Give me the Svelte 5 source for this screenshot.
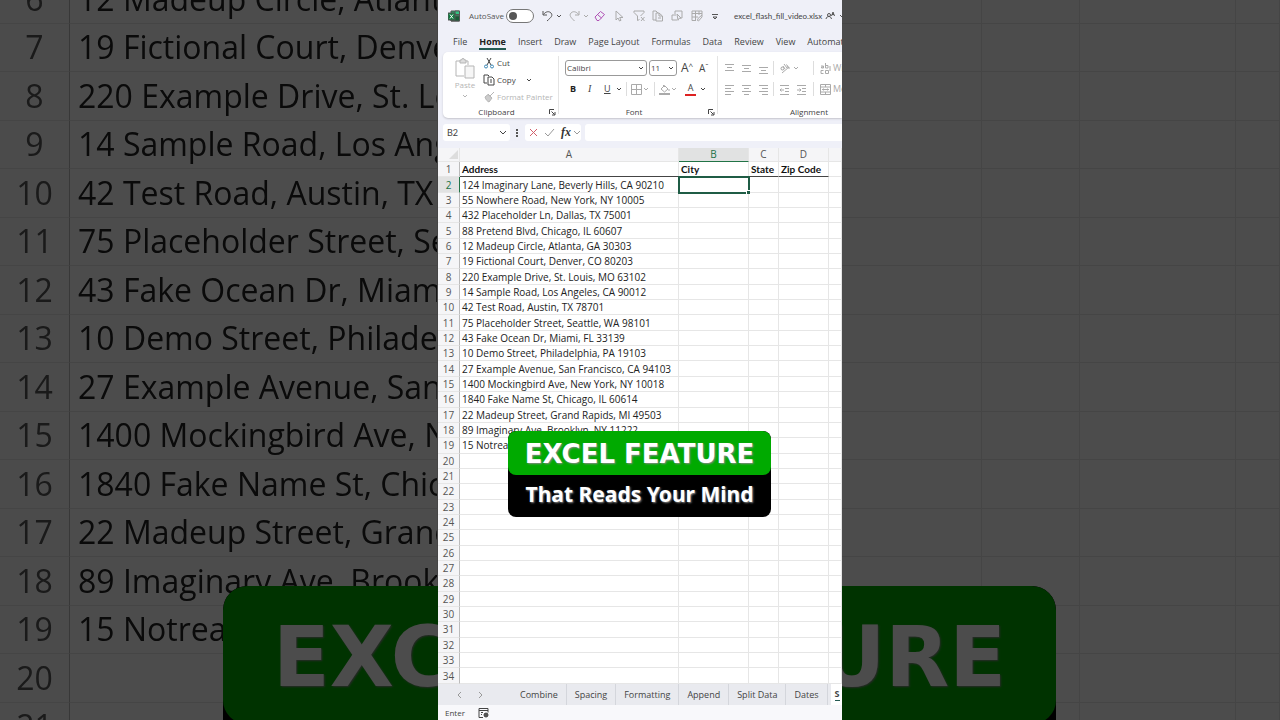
<script lang="ts">
    const addresses = [
        '124 Imaginary Lane, Beverly Hills, CA 90210',
        '55 Nowhere Road, New York, NY 10005',
        '432 Placeholder Ln, Dallas, TX 75001',
        '88 Pretend Blvd, Chicago, IL 60607',
        '12 Madeup Circle, Atlanta, GA 30303',
        '19 Fictional Court, Denver, CO 80203',
        '220 Example Drive, St. Louis, MO 63102',
        '14 Sample Road, Los Angeles, CA 90012',
        '42 Test Road, Austin, TX 78701',
        '75 Placeholder Street, Seattle, WA 98101',
        '43 Fake Ocean Dr, Miami, FL 33139',
        '10 Demo Street, Philadelphia, PA 19103',
        '27 Example Avenue, San Francisco, CA 94103',
        '1400 Mockingbird Ave, New York, NY 10018',
        '1840 Fake Name St, Chicago, IL 60614',
        '22 Madeup Street, Grand Rapids, MI 49503',
        '89 Imaginary Ave, Brooklyn, NY 11222',
        '15 Notreal'
    ]

    const rows = Array.from({ length: 33 }, (_, i) => ({ number: i + 2, address: addresses[i] ?? '' }))
    const backdropRows = rows.slice(4, 20)

    const menu = ['File', 'Home', 'Insert', 'Draw', 'Page Layout', 'Formulas', 'Data', 'Review', 'View', 'Automate']
    const sheets = ['Combine', 'Spacing', 'Formatting', 'Append', 'Split Data', 'Dates']

    let autosave = $state(false)
    let cell = $state('B2')
    let formula = $state('')
</script>

{#snippet chevron()}
    <svg class="chevron" viewBox="0 0 6 6" width="6" height="6"><path d="M1 2l2 2 2-2" /></svg>
{/snippet}

{#snippet launcher()}
    <button class="launcher" aria-label="More options">
        <svg viewBox="0 0 7 7" width="7" height="7"><path d="M.5 5V.5H5M2.500 2.500l3 3M6 3v3H3" /></svg>
    </button>
{/snippet}

{#snippet lines(kind)}
    <svg viewBox="0 0 11 11" width="11" height="11">
        {#if kind === 'top'}
            <path d="M1 1.500h9M3 4.500h5M1 7.500h9" />
        {:else if kind === 'middle'}
            <path d="M1 2.500h9M3 5.500h5M1 8.500h9" />
        {:else if kind === 'bottom'}
            <path d="M1 4.500h9M3 7.500h5M1 10.500h9" />
        {:else if kind === 'left'}
            <path d="M1 1.500h9M1 4.500h6M1 7.500h9M1 10.500h6" />
        {:else if kind === 'center'}
            <path d="M1 1.500h9M3 4.500h5M1 7.500h9M3 10.500h5" />
        {:else if kind === 'right'}
            <path d="M1 1.500h9M4 4.500h6M1 7.500h9M4 10.500h6" />
        {:else if kind === 'outdent'}
            <path d="M1 1.500h9M6 4.500h4M6 7.500h4M1 10.500h9M5 6H1M2.500 4.500L1 6l1.500 1.500" />
        {:else}
            <path d="M1 1.500h9M6 4.500h4M6 7.500h4M1 10.500h9M1 6h4M3.500 4.500L5 6 3.500 7.500" />
        {/if}
    </svg>
{/snippet}

{#snippet title()}
    <div class="headline">EXCEL FEATURE</div>
    <div class="subline">That Reads Your Mind</div>
{/snippet}

<main>
    <div class="backdrop left" aria-hidden="true">
        <table class="sheet large">
            <colgroup>
                <col class="num" /><col />
            </colgroup>
            <tbody>
                {#each backdropRows as row}
                    <tr>
                        <th>{row.number}</th>
                        <td>{row.address}</td>
                    </tr>
                {/each}
            </tbody>
        </table>
        <div class="banner large">{@render title()}</div>
    </div>

    <section class="window">
        <header>
            <svg class="logo" viewBox="0 0 12 12" width="12" height="12">
                <path d="M3 1h8.500v10H3z" fill="#21a366" />
                <path d="M7 1h4.500v3.500H7z" fill="#33c481" />
                <path d="M3 6h8.500v5H3z" fill="#185c37" />
                <path d="M0 3h7v7H0z" fill="#107c41" />
                <path d="M2 4.500l3 4M5 4.500l-3 4" stroke="#fff" />
            </svg>
            <label for="autosave">AutoSave</label>
            <input id="autosave" class="toggle" type="checkbox" bind:checked={autosave} />
            <button aria-label="Undo">
                <svg viewBox="0 0 12 12" width="12" height="12"><path d="M1 1v4h4M1.500 4.500C3.500 1.500 7 .8 9 3c2 2.500.5 4-4 8" /></svg>
            </button>
            {@render chevron()}
            <button class="faded" aria-label="Redo">
                <svg viewBox="0 0 12 12" width="12" height="12"><path d="M10 1v4H6M9.500 4.500C7.500 1.500 4 .8 2 3c-2 2.500-.5 4 3.500 8" /></svg>
            </button>
            <span class="faded">{@render chevron()}</span>
            <button class="purple" aria-label="Eraser">
                <svg viewBox="0 0 12 12" width="12" height="12"><path d="M1 7l5.500-5.500 4 3L5 10.500H3zM3.500 4.500l4 3.500" /></svg>
            </button>
            <button class="faded" aria-label="Select">
                <svg viewBox="0 0 12 12" width="12" height="12"><path d="M1 1v9l2-2 1.500 3 1.500-.7L4.700 7.500H8z" /></svg>
            </button>
            <button class="faded" aria-label="Clear filter">
                <svg viewBox="0 0 12 12" width="12" height="12"><path d="M1 1h10v1.500L7.500 6M1 1v1.500L4.500 6v4.500L6.500 9.500M8 7l3.500 4M11.500 7L8 11" /></svg>
            </button>
            <button class="faded" aria-label="Paste values">
                <svg viewBox="0 0 12 12" width="12" height="12"><path d="M4 10H1V1h3l2 2M4 3h3l3.500 3v5H4zM7 3v3h3M6 8h3" /></svg>
            </button>
            <button class="faded" aria-label="Select objects">
                <svg viewBox="0 0 12 12" width="12" height="12"><path d="M4 4V1h7v7H9M6 10H1V5h4M6 4l4 4-2 .3-1 2z" /></svg>
            </button>
            <button class="faded" aria-label="Format table">
                <svg viewBox="0 0 12 12" width="12" height="12"><path d="M5 10.500H1V1h10v4M1 3.500h10M1 7h6M4.500 1v9M8 1v4M6.500 10.500l.5-2 4-3.500v2L7.500 11z" /></svg>
            </button>
            <button aria-label="Customize toolbar">
                <svg viewBox="0 0 8 12" width="8" height="12"><path d="M1 4.500h6M2 7l2 2 2-2z" /></svg>
            </button>
            <span class="filename">excel_flash_fill_video.xlsx</span>
            <svg viewBox="0 0 12 12" width="12" height="12"><path d="M1 9c.5-2 1.500-2.500 3-2.500S6 7.500 6.500 9M4 6.500a1.500 1.500 0 100-3 1.500 1.500 0 000 3M6.500 6L8 2l1.500 4M7 4.500h2" /></svg>
            {@render chevron()}
        </header>

        <nav class="menu">
            {#each menu as item}
                <button class:active={item === 'Home'}>{item}</button>
            {/each}
        </nav>

        <div class="ribbon">
            <div class="group clipboard">
                <button class="paste">
                    <svg viewBox="0 0 20 21" width="20" height="21">
                        <path d="M5 3H1v15h8M13 7V3H9" fill="none" />
                        <path d="M5 2h1.500a1.500 1.500 0 013 0H11v3H5z" fill="#ddd" />
                        <path d="M10 8h9v12h-9z" fill="#f6f6f6" />
                    </svg>
                    Paste
                    {@render chevron()}
                </button>
                <div class="actions">
                    <button>
                        <svg viewBox="0 0 12 12" width="12" height="12"><path d="M4 1l4 7M8 1L4 8" /><path d="M4.500 9.500a1.500 1.500 0 11-3 0 1.500 1.500 0 013 0zM10.500 9.500a1.500 1.500 0 11-3 0 1.500 1.500 0 013 0z" stroke="#3d87b5" /></svg>
                        Cut
                    </button>
                    <button>
                        <svg viewBox="0 0 12 12" width="12" height="12"><path d="M4 9H1V1h4l1 1M5 3h4l2 2v6H5zM7 6h2M7 8h2" /></svg>
                        Copy
                        <span class="more">{@render chevron()}</span>
                    </button>
                    <button class="disabled">
                        <svg viewBox="0 0 12 12" width="12" height="12"><path d="M11 1L7 5M5 3l4 4M5 3.500L2 6c1 3 2 4 4 5l3-4z" fill="#ccc" /></svg>
                        Format Painter
                    </button>
                </div>
                <footer>Clipboard{@render launcher()}</footer>
            </div>

            <div class="group font">
                <div class="tools first">
                    <span class="combo">
                        <select aria-label="Font"><option>Calibri</option></select>
                        {@render chevron()}
                    </span>
                    <span class="combo size">
                        <select aria-label="Font size"><option>11</option></select>
                        {@render chevron()}
                    </span>
                    <button class="grow">A<sup>^</sup></button>
                    <button class="shrink">A<sup>ˇ</sup></button>
                </div>
                <div class="tools second">
                    <button class="bold">B</button>
                    <button class="italic">I</button>
                    <button class="underline">U</button>
                    {@render chevron()}
                    <i class="divider"></i>
                    <button class="faded" aria-label="Borders">
                        <svg viewBox="0 0 11 11" width="11" height="11"><path d="M.5.5h10v10H.5zM5.500.5v10M.5 5.500h10" /></svg>
                    </button>
                    <span class="faded">{@render chevron()}</span>
                    <i class="divider"></i>
                    <button class="faded" aria-label="Fill color">
                        <svg viewBox="0 0 11 11" width="11" height="11"><path d="M2 5l3.500-3.500L9 5 5.500 8zM4 1l2 2M10 5v2" /><path d="M0 10h11" stroke-width="2" /></svg>
                    </button>
                    <span class="faded">{@render chevron()}</span>
                    <button class="color">A</button>
                    {@render chevron()}
                </div>
                <footer>Font{@render launcher()}</footer>
            </div>

            <div class="group alignment">
                <div class="tools first">
                    {#each ['top', 'middle', 'bottom'] as kind}
                        <button aria-label="Align {kind}">{@render lines(kind)}</button>
                    {/each}
                    <i class="divider"></i>
                    <button class="angle" aria-label="Orientation">
                        <svg viewBox="0 0 11 11" width="11" height="11"><path d="M2 6a1.500 1.500 0 113-1 1.500 1.500 0 01-3 1M4 3l2 3M5 1l3 4M8 4a1 1 0 10-1-2M3 10l7-6M10 6V4H8" /></svg>
                    </button>
                    {@render chevron()}
                    <i class="divider tall"></i>
                    <button class="wide">
                        <svg viewBox="0 0 11 11" width="11" height="11"><path d="M1 3h2.500v2H1.500V4h2M5.500 0v5h2.500V2.500H5.500M3.500 7.500H1v3h2.500M5.500 7.500h3v3h-3zM10 3v5" /></svg>
                        Wrap
                    </button>
                </div>
                <div class="tools second">
                    {#each ['left', 'center', 'right'] as kind}
                        <button aria-label="Align {kind}">{@render lines(kind)}</button>
                    {/each}
                    <i class="divider"></i>
                    <button aria-label="Decrease indent">{@render lines('outdent')}</button>
                    <button aria-label="Increase indent">{@render lines('indent')}</button>
                    <i class="divider tall"></i>
                    <button class="wide">
                        <svg viewBox="0 0 11 11" width="11" height="11"><path d="M.5.500h10v10H.5zM.5 3h10M.5 8h10M5.500.5V3M5.500 8v2.500M2 5.500h7M3.500 4.500l-1 1 1 1M7.500 4.500l1 1-1 1" /></svg>
                        Merge
                    </button>
                </div>
                <footer>Alignment</footer>
            </div>
        </div>

        <div class="formula">
            <span class="namebox">
                <input aria-label="Name box" bind:value={cell} />
                <svg viewBox="0 0 8 6" width="8" height="6"><path d="M1 1l3 3 3-3" /></svg>
            </span>
            <svg class="dots" viewBox="0 0 2 8" width="2" height="8"><path d="M0 0h2v2H0zM0 3h2v2H0zM0 6h2v2H0z" /></svg>
            <div class="entry">
                <button class="cancel" aria-label="Cancel">
                    <svg viewBox="0 0 9 9" width="9" height="9"><path d="M1 1l7 7M8 1L1 8" /></svg>
                </button>
                <button class="enter" aria-label="Enter">
                    <svg viewBox="0 0 11 9" width="11" height="9"><path d="M1 5l3 3 6-7" /></svg>
                </button>
                <button class="fx">fx<svg viewBox="0 0 8 6" width="8" height="6"><path d="M1 1l3 3 3-3" /></svg></button>
            </div>
            <input class="value" aria-label="Formula bar" bind:value={formula} />
        </div>

        <div class="grid">
            <table class="sheet">
                <colgroup>
                    <col class="num" /><col class="a" /><col class="b" /><col class="c" /><col class="d" /><col />
                </colgroup>
                <thead>
                    <tr>
                        <th class="corner"><svg viewBox="0 0 9 9" width="9" height="9"><path d="M9 0v9H0z" /></svg></th>
                        <th>A</th>
                        <th class="selected">B</th>
                        <th>C</th>
                        <th>D</th>
                        <th></th>
                    </tr>
                </thead>
                <tbody>
                    <tr class="titles">
                        <th>1</th>
                        <td>Address</td>
                        <td>City</td>
                        <td>State</td>
                        <td>Zip Code</td>
                        <td></td>
                    </tr>
                    {#each rows as row}
                        <tr class:selected={row.number === 2}>
                            <th>{row.number}</th>
                            <td>{row.address}</td>
                            <td class:cursor={row.number === 2}></td>
                            <td></td><td></td><td></td>
                        </tr>
                    {/each}
                </tbody>
            </table>
        </div>

        <nav class="sheets">
            <button class="arrow" aria-label="Previous sheet">
                <svg viewBox="0 0 5 8" width="5" height="8"><path d="M4 1L1 4l3 3" /></svg>
            </button>
            <button class="arrow" aria-label="Next sheet">
                <svg viewBox="0 0 5 8" width="5" height="8"><path d="M1 1l3 3-3 3" /></svg>
            </button>
            <div class="tabs">
                {#each sheets as sheet}
                    <button>{sheet}</button>
                {/each}
                <button class="active"><span>S</span></button>
            </div>
        </nav>

        <div class="status">
            Enter
            <svg viewBox="0 0 11 10" width="11" height="10"><path d="M5 9.500H1V.5h9v4M1 2.500h9M3 4.500h2M3 6.500h1" /><path d="M10 7a2 2 0 11-4 0 2 2 0 014 0z" fill="#555" /></svg>
        </div>

        <div class="banner">{@render title()}</div>
    </section>

    <div class="backdrop right" aria-hidden="true">
        <table class="sheet large">
            <colgroup>
                <col class="rest-b" /><col class="c" /><col class="d" /><col />
            </colgroup>
            <tbody>
                {#each backdropRows as row}
                    <tr><td></td><td></td><td></td><td></td></tr>
                {/each}
            </tbody>
        </table>
        <div class="banner large">{@render title()}</div>
    </div>
</main>

<style>
    :global(body) {
        background: #4c4c4c;
    }
    main {
        display: flex;
        height: 100vh;
        overflow: hidden;
        font-family: 'Open Sans', 'Noto Sans', sans-serif;
    }
    button, input, select {
        font: inherit;
        color: inherit;
        margin: 0;
        padding: 0;
        border: none;
        background: none;
        outline: none;
        box-sizing: border-box;
    }
    button {
        display: flex;
        align-items: center;
        white-space: nowrap;
        cursor: pointer;
    }
    svg {
        display: block;
        flex: none;
        fill: none;
        stroke: currentColor;
    }

    .backdrop {
        position: relative;
        flex: 1;
        min-width: 0;
        overflow: hidden;
        background: #fff;
        filter: brightness(0.3);
    }
    .window {
        position: relative;
        flex: 0 1 404px;
        min-width: 0;
        display: flex;
        flex-direction: column;
        overflow: hidden;
        background: #eff0f8;
        color: #444;
        font-size: 9px;
        line-height: 12px;
    }

    header {
        display: grid;
        grid-template-columns: 21px 37px 36px 12px 15px 12px 13px 21px 18px 19px 19px 20px 20px 23px 91px 12px 8px;
        align-items: center;
        height: 32px;
        padding-left: 10px;
        font-size: 8px;
        color: #555;
    }
    header .chevron {
        margin-left: 2px;
    }
    .toggle {
        appearance: none;
        display: flex;
        align-items: center;
        width: 28px;
        height: 14px;
        padding: 0 2px;
        border: 1px solid #777;
        border-radius: 7px;
        background: #fff;
    }
    .toggle::before {
        content: '';
        width: 8px;
        height: 8px;
        border-radius: 50%;
        background: #555;
    }
    .toggle:checked {
        justify-content: flex-end;
    }
    .faded {
        color: #aaa;
    }
    .purple {
        color: #b052b5;
    }
    .filename {
        white-space: nowrap;
        font-family: Lato, sans-serif;
        color: #444;
    }

    .menu {
        display: flex;
        gap: 12px;
        height: 20px;
        padding-left: 15px;
    }
    .menu button {
        height: 18px;
        padding-top: 4px;
        border-bottom: 2px solid transparent;
    }
    .menu .active {
        color: #222;
        font-weight: bold;
        border-bottom-color: #245a52;
    }

    .ribbon {
        display: flex;
        height: 66px;
        margin-left: 5px;
        overflow: hidden;
        border-radius: 5px 0 0 5px;
        background: #fff;
        box-shadow: 0 1px 2px #c4c4cc;
    }
    .group {
        position: relative;
        display: flex;
        flex: none;
        box-sizing: border-box;
        margin: 4px 0;
        border-right: 1px solid #e4e4e4;
    }
    .group footer {
        position: absolute;
        left: 0;
        right: 0;
        bottom: -4px;
        height: 12px;
        padding-right: 8px;
        text-align: center;
        font-size: 8px;
    }
    .launcher {
        position: absolute;
        right: 2px;
        top: 3px;
    }
    .clipboard {
        width: 116px;
        gap: 5px;
        padding: 1px 0 0 9px;
    }
    .paste {
        flex-direction: column;
        align-self: flex-start;
        width: 26px;
        padding-top: 1px;
        font-size: 8px;
        color: #b5b5b5;
    }
    .paste .chevron {
        margin-top: 2px;
    }
    .actions {
        display: flex;
        flex-direction: column;
        gap: 5px;
        font-size: 8px;
    }
    .actions button {
        gap: 2px;
    }
    .more {
        margin-left: 8px;
    }
    .actions .disabled {
        color: #b5b5b5;
    }
    .font {
        width: 159px;
        flex-direction: column;
        padding-left: 6px;
    }
    .tools {
        display: flex;
        align-items: center;
    }
    .tools.first {
        height: 24px;
    }
    .tools.second {
        height: 18px;
    }
    .combo {
        display: flex;
        align-items: center;
        width: 82px;
        height: 16px;
        margin-right: 2px;
        padding-right: 2px;
        box-sizing: border-box;
        border: 1px solid #999;
        border-radius: 3px;
        font-size: 8px;
    }
    .combo.size {
        width: 28px;
    }
    .combo select {
        appearance: none;
        flex: 1;
        min-width: 0;
        padding-left: 1px;
    }
    .grow, .shrink {
        width: 18px;
        padding-left: 2px;
        font-size: 12px;
    }
    .shrink {
        font-size: 10px;
    }
    sup {
        font-size: 8px;
        line-height: 8px;
        align-self: flex-start;
    }
    .font .second {
        padding-left: 3px;
    }
    .bold, .italic, .underline {
        width: 17px;
    }
    .bold {
        padding-left: 2px;
        font-weight: bold;
        color: #222;
    }
    .italic {
        padding-left: 3px;
        font-family: 'Liberation Serif', serif;
        font-style: italic;
        font-size: 10px;
    }
    .underline {
        width: 14px;
        padding-left: 2px;
        text-decoration: underline;
    }
    .divider {
        width: 1px;
        height: 14px;
        margin: 0 4px;
        background: #ddd;
    }
    .font .second button {
        flex: none;
    }
    .font .second .faded {
        margin-right: 1px;
    }
    .font .second .color {
        justify-content: center;
        width: 11px;
        height: 13px;
        margin: 0 4px 0 7px;
        border-bottom: 2px solid #d22;
    }
    .alignment {
        flex-direction: column;
        width: 190px;
        padding-left: 6px;
        border: none;
        color: #aaa;
    }
    .alignment button {
        width: 17px;
    }
    .alignment .angle {
        width: 14px;
    }
    .alignment .divider {
        margin: 0 5px 0 -2px;
    }
    .alignment .tall {
        margin: 0 6px 0 14px;
    }
    .alignment .second .tall {
        margin-left: 0;
    }
    .alignment .wide {
        width: auto;
        gap: 2px;
        flex: none;
    }
    .alignment footer {
        color: #444;
    }

    .formula {
        display: flex;
        align-items: center;
        height: 17px;
        margin: 6px 0 7px;
        padding-left: 5px;
    }
    .namebox, .entry {
        display: flex;
        align-items: center;
        height: 17px;
        background: #fff;
        border-radius: 3px;
    }
    .namebox {
        width: 67px;
        padding-right: 3px;
        box-sizing: border-box;
    }
    .namebox input {
        flex: 1;
        min-width: 0;
        padding-left: 4px;
        font-family: Lato, sans-serif;
        font-size: 9px;
    }
    .dots {
        margin: 0 7px 0 6px;
        fill: #555;
        stroke: none;
    }
    .entry {
        gap: 6px;
        padding-left: 4px;
        color: #999;
    }
    .cancel {
        color: #d2606c;
    }
    .fx {
        gap: 2px;
        color: #333;
        font: italic bold 12px 'Liberation Serif', serif;
    }
    .fx svg {
        color: #999;
    }
    .value {
        flex: 1;
        min-width: 0;
        height: 17px;
        margin-left: 4px;
        background: #fff;
        border-radius: 3px 0 0 3px;
    }

    .grid {
        flex: 1;
        min-height: 0;
    }
    .sheet {
        width: 100%;
        height: 100%;
        table-layout: fixed;
        border-spacing: 0;
        background: #fff;
        font-family: 'Open Sans', sans-serif;
        font-size: 10px;
        line-height: 14px;
        color: #222;
    }
    .num { width: 22px; }
    .a { width: 219px; }
    .b { width: 70px; }
    .c { width: 30px; }
    .d { width: 50px; }
    .sheet th, .sheet td {
        padding: 0;
        white-space: nowrap;
        border-right: 1px solid #e6e6e6;
        border-bottom: 1px solid #e6e6e6;
    }
    .sheet td {
        padding-left: 2px;
    }
    .sheet th {
        font-weight: normal;
        color: #555;
        background: #f5f5f7;
    }
    .sheet tbody th {
        border-right-color: #bbb;
    }
    .sheet thead th {
        height: 13px;
        line-height: 13px;
    }
    .corner svg {
        margin-left: 11px;
        fill: #ddd;
        stroke: none;
    }
    .sheet thead .selected {
        background: #e1e2e2;
        color: #217346;
        border-bottom-color: #217346;
    }
    .sheet .selected th {
        background: #e1e2e2;
        color: #217346;
        border-right-color: #217346;
    }
    .sheet .titles td {
        font-weight: bold;
        font-family: Lato, sans-serif;
        color: #111;
        border-bottom-color: #444;
    }
    .sheet .titles td:last-child {
        border-bottom-color: #e6e6e6;
    }
    .cursor {
        position: relative;
        outline: 2px solid #1f5c45;
        outline-offset: -1px;
    }
    .cursor::after {
        content: '';
        position: absolute;
        right: -2px;
        bottom: -2px;
        width: 3px;
        height: 3px;
        border: 1px solid #fff;
        border-width: 1px 0 0 1px;
        background: #1f5c45;
    }

    .sheet.large {
        position: absolute;
        left: 0;
        top: -25px;
        height: 776px;
        font-size: 32px;
        line-height: 40px;
    }
    .large .num { width: 70px; }
    .large .rest-b { width: 140px; }
    .large .c { width: 98px; }
    .large .d { width: 156px; }
    .large td {
        padding-left: 8px;
        overflow: hidden;
    }
    .sheet.large th {
        background: #fbfbfb;
    }

    .sheets {
        display: flex;
        align-items: center;
        height: 21px;
        background: #e9eaef;
    }
    .arrow {
        width: 21px;
        padding-left: 19px;
        color: #999;
    }
    .tabs {
        display: flex;
        align-self: stretch;
        margin-left: 32px;
    }
    .tabs button {
        padding: 0 8px;
        border-right: 1px solid #d4d6dc;
    }
    .tabs .active {
        margin-left: 3px;
        padding-left: 4px;
        background: #fff;
        font-weight: bold;
    }
    .tabs .active span {
        border-bottom: 1px solid #245a52;
    }
    .status {
        display: flex;
        align-items: center;
        gap: 13px;
        height: 15px;
        padding-left: 7px;
        background: #f8f8fb;
        font-size: 8px;
    }

    .banner {
        position: absolute;
        left: 70px;
        top: 431px;
        width: 263px;
        overflow: hidden;
        border-radius: 8px;
        background: #000;
        color: #fff;
        text-align: center;
        white-space: nowrap;
        font-weight: bold;
        text-shadow: 1px 1px 2px #888;
    }
    .headline {
        height: 44px;
        line-height: 46px;
        border-radius: 8px;
        background: #0a0;
        font-family: 'DejaVu Sans', sans-serif;
        font-size: 26px;
    }
    .subline {
        height: 42px;
        line-height: 38px;
        font-family: 'Noto Sans', sans-serif;
        font-size: 21px;
    }
    .banner.large {
        left: 223px;
        top: 586px;
        width: 833px;
        border-radius: 24px;
    }
    .right .banner.large {
        left: auto;
        right: 224px;
    }
    .large .headline {
        height: 138px;
        line-height: 144px;
        border-radius: 24px;
        font-size: 83px;
    }
    .large .subline {
        height: 132px;
        line-height: 120px;
        font-size: 66px;
    }
</style>
